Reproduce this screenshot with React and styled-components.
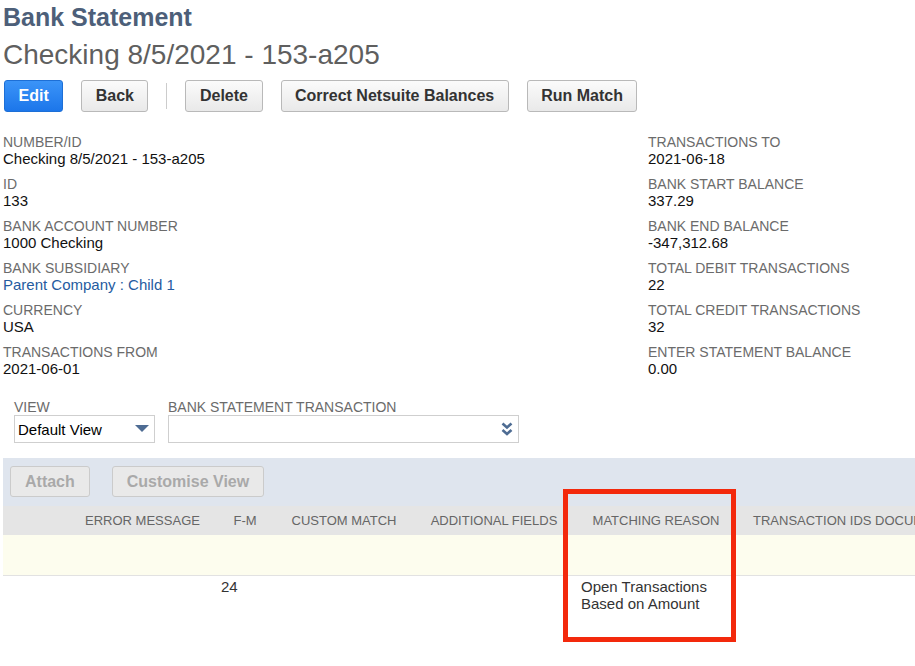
import React from 'react'
import styled, { createGlobalStyle } from 'styled-components'

const GlobalStyle = createGlobalStyle`
body {
  margin: 0;
  background: #fff;
  font-family: "Liberation Sans", Arial, sans-serif;
  overflow: hidden;
}
`

const Page = styled.div`
position: relative;
width: 915px;
height: 666px;
overflow: hidden;
padding: 3px 0 0 3px;
box-sizing: border-box;
`

const Title = styled.h1`
margin: 0;
font-size: 25px;
line-height: 28px;
font-weight: bold;
color: #4d5f79;
`

const Subtitle = styled.h2`
margin: 8px 0 0;
font-size: 28px;
line-height: 32px;
font-weight: normal;
color: #5f5f5f;
`

const Toolbar = styled.div`
display: flex;
align-items: center;
gap: 18px;
margin-top: 9px;
padding-left: 1px;
`

const Button = styled.button`
height: 32px;
padding: 0 13.5px;
font-family: inherit;
font-size: 16px;
font-weight: bold;
border-radius: 3px;
border: 1px solid ${p => (p.$primary ? '#1d6fd6' : '#b9b9b9')};
color: ${p => (p.$primary ? '#fff' : '#333')};
background: ${p => (p.$primary ? 'linear-gradient(#3b94f8, #1c76ea)' : 'linear-gradient(#fbfbfb, #e9e9e9)')};
`

const Divider = styled.span`
width: 1px;
height: 26px;
background: #ccc;
`

const Fields = styled.div`
display: grid;
grid-template-columns: 645px 1fr;
margin-top: 23px;
`

const Column = styled.div`
display: flex;
flex-direction: column;
`

const Field = styled.div`
height: 42px;
`

const Label = styled.div`
font-size: 14px;
line-height: 15px;
color: #6b6b6b;
text-transform: uppercase;
white-space: nowrap;
`

const Value = styled.div`
font-size: 15px;
line-height: 17px;
color: ${p => (p.$link ? '#255ba0' : '#111')};
`

const Filters = styled.div`
display: flex;
gap: 13px;
padding-left: 11px;
margin-top: 13px;
`

const Filter = styled.div`
display: flex;
flex-direction: column;
`

const Select = styled.div`
display: flex;
align-items: center;
justify-content: space-between;
box-sizing: border-box;
width: ${p => p.$width}px;
height: 28px;
padding: 0 5px 0 3px;
border: 1px solid #cfcfcf;
font-size: 15px;
color: #000;
`

const Band = styled.div`
display: flex;
gap: 22px;
height: 48px;
box-sizing: border-box;
padding: 8px 0 0 7px;
margin-top: 15px;
background: #dfe5ee;
`

const GhostButton = styled.button`
height: 31px;
padding: 0 14px;
font-family: inherit;
font-size: 16px;
font-weight: bold;
color: #a9a9a9;
background: #e9e9e9;
border: 1px solid #cbcbcb;
border-radius: 3px;
`

const Row = styled.div`
display: grid;
grid-template-columns: 67px 145px 60px 138px 162px 162px 300px;
height: ${p => p.$height}px;
background: ${p => p.$bg};
border-bottom: ${p => (p.$line ? '1px solid #e2e2e2' : 'none')};
`

const HeadCell = styled.div`
display: flex;
align-items: center;
justify-content: ${p => (p.$left ? 'flex-start' : 'center')};
padding-left: ${p => (p.$left ? '16px' : '0')};
font-size: 13px;
color: #666;
white-space: nowrap;
`

const Cell = styled.div`
padding: 2px 6px 0;
font-size: 15px;
line-height: 17px;
color: #333;
`

const Highlight = styled.div`
position: absolute;
left: 563px;
top: 489px;
width: 173px;
height: 153px;
box-sizing: border-box;
border: 5px solid #f3290c;
`

const Triangle = () => (
  <svg width="14" height="8" viewBox="0 0 14 8">
    <path d="M0 0 H14 L7 7 Z" fill="#4e6c93" />
  </svg>
)

const DoubleChevron = () => (
  <svg width="12" height="15" viewBox="0 0 12 15">
    <path d="M1.5 1.5 L6 5.5 L10.5 1.5" fill="none" stroke="#4e6c93" strokeWidth="2.6" />
    <path d="M1.5 8 L6 12 L10.5 8" fill="none" stroke="#4e6c93" strokeWidth="2.6" />
  </svg>
)

const left = [
  ['Number/ID', 'Checking 8/5/2021 - 153-a205'],
  ['ID', '133'],
  ['Bank Account Number', '1000 Checking'],
  ['Bank Subsidiary', 'Parent Company : Child 1', true],
  ['Currency', 'USA'],
  ['Transactions From', '2021-06-01'],
]

const right = [
  ['Transactions To', '2021-06-18'],
  ['Bank Start Balance', '337.29'],
  ['Bank End Balance', '-347,312.68'],
  ['Total Debit Transactions', '22'],
  ['Total Credit Transactions', '32'],
  ['Enter Statement Balance', '0.00'],
]

const renderFields = list =>
  list.map(([label, value, link]) => (
    <Field key={label}>
      <Label>{label}</Label>
      <Value $link={link}>{value}</Value>
    </Field>
  ))

const App = () => {
  return (
    <Page>
      <GlobalStyle />
      <Title>Bank Statement</Title>
      <Subtitle>Checking 8/5/2021 - 153-a205</Subtitle>
      <Toolbar>
        <Button $primary>Edit</Button>
        <Button>Back</Button>
        <Divider />
        <Button>Delete</Button>
        <Button>Correct Netsuite Balances</Button>
        <Button>Run Match</Button>
      </Toolbar>
      <Fields>
        <Column>{renderFields(left)}</Column>
        <Column>{renderFields(right)}</Column>
      </Fields>
      <Filters>
        <Filter>
          <Label>View</Label>
          <Select $width={141}>
            Default View
            <Triangle />
          </Select>
        </Filter>
        <Filter>
          <Label>Bank Statement Transaction</Label>
          <Select $width={351}>
            <span />
            <DoubleChevron />
          </Select>
        </Filter>
      </Filters>
      <Band>
        <GhostButton>Attach</GhostButton>
        <GhostButton>Customise View</GhostButton>
      </Band>
      <Row $height={29} $bg="#e5e5e5">
        <HeadCell />
        <HeadCell>ERROR MESSAGE</HeadCell>
        <HeadCell>F-M</HeadCell>
        <HeadCell>CUSTOM MATCH</HeadCell>
        <HeadCell>ADDITIONAL FIELDS</HeadCell>
        <HeadCell>MATCHING REASON</HeadCell>
        <HeadCell $left>TRANSACTION IDS DOCUMENT NUMBERS</HeadCell>
      </Row>
      <Row $height={40} $bg="#fdfdee" $line />
      <Row $height={91} $bg="#fff" $line>
        <Cell />
        <Cell />
        <Cell>24</Cell>
        <Cell />
        <Cell />
        <Cell>
          Open Transactions
          <br />
          Based on Amount
        </Cell>
        <Cell />
      </Row>
      <Highlight />
    </Page>
  )
}

export default App
